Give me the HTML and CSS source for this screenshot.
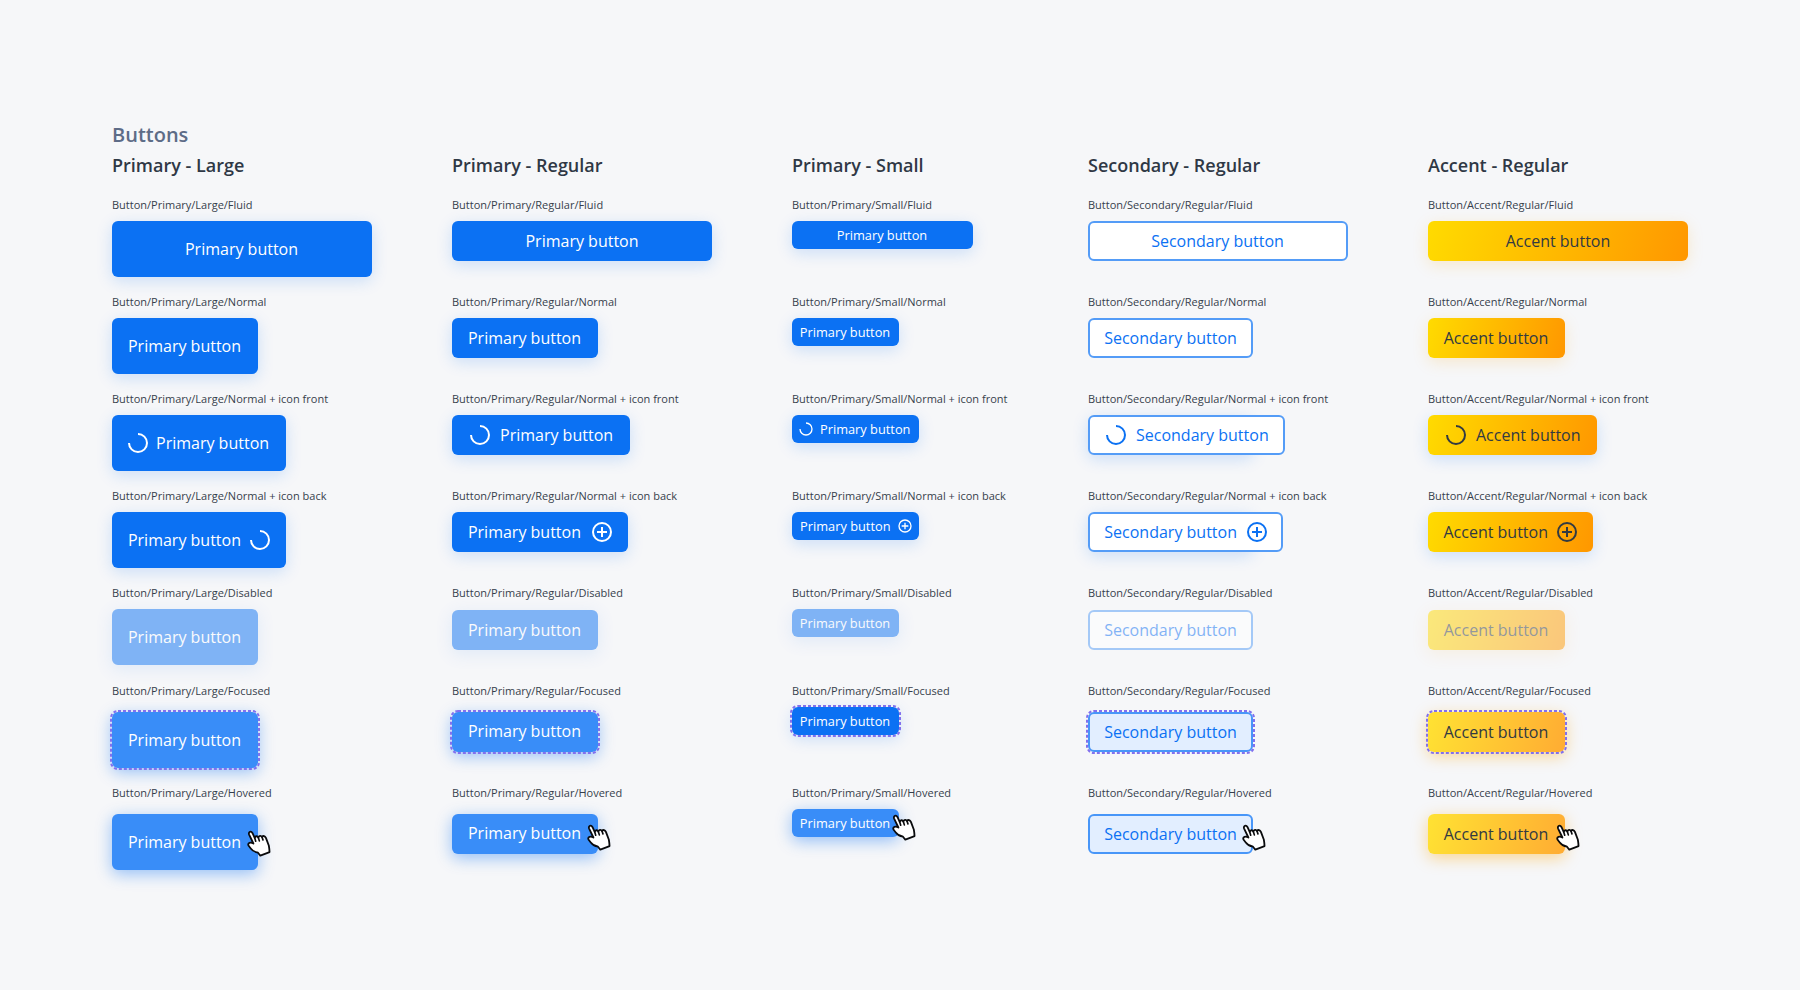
FILE: index.html
```html
<!DOCTYPE html>
<html lang="en">
<head>
<meta charset="utf-8">
<title>Buttons</title>
<link rel="stylesheet" href="styles.css">
</head>
<body>
<svg class="defs" width="0" height="0">
  <symbol id="spin" viewBox="0 0 24 24"><path d="M12 3A9 9 0 1 1 3 12" fill="none" stroke="currentColor" stroke-width="2"/></symbol>
  <symbol id="plus" viewBox="0 0 24 24"><circle cx="12" cy="12" r="9" fill="none" stroke="currentColor" stroke-width="2"/><path d="M12 7V17M7 12H17" stroke="currentColor" stroke-width="2"/></symbol>
  <symbol id="hand" viewBox="0 0 72 82"><path d="M19 41L6 14C3 5 12 2 16 9L23 24C25 18 31 17 34 23C36 17 42 16 45 21C49 16 54 18 57 24L66 48C67 54 68 60 68 67L40 78L33 69C24 67 16 63 11 56L4 47C1 39 10 36 19 41Z" fill="#fff" stroke="#0a0b0d" stroke-width="5.5" stroke-linejoin="round"/><path d="M23 24L26 34M34 23L37 33M45 21L48 30" stroke="#0a0b0d" stroke-width="5" stroke-linecap="round"/></symbol>
</svg>
<main class="sheet">
  <h1 class="title">Buttons</h1>
  <div class="columns">
    <section class="column large">
      <h2 class="heading">Primary - Large</h2>
      <div class="item"><p class="label">Button/Primary/Large/Fluid</p><button class="btn primary fluid">Primary button</button></div>
      <div class="item"><p class="label">Button/Primary/Large/Normal</p><button class="btn primary">Primary button</button></div>
      <div class="item"><p class="label">Button/Primary/Large/Normal + icon front</p><button class="btn primary front"><svg class="icon"><use href="#spin"/></svg>Primary button</button></div>
      <div class="item"><p class="label">Button/Primary/Large/Normal + icon back</p><button class="btn primary back">Primary button<svg class="icon"><use href="#spin"/></svg></button></div>
      <div class="item"><p class="label">Button/Primary/Large/Disabled</p><button class="btn primary disabled">Primary button</button></div>
      <div class="item active"><p class="label">Button/Primary/Large/Focused</p><button class="btn primary lit">Primary button<svg class="ring"><rect class="dash" x="1" y="1" rx="7"/></svg></button></div>
      <div class="item active"><p class="label">Button/Primary/Large/Hovered</p><button class="btn primary lit">Primary button<svg class="cursor"><use href="#hand"/></svg></button></div>
    </section>
    <section class="column regular">
      <h2 class="heading">Primary - Regular</h2>
      <div class="item"><p class="label">Button/Primary/Regular/Fluid</p><button class="btn primary fluid">Primary button</button></div>
      <div class="item"><p class="label">Button/Primary/Regular/Normal</p><button class="btn primary">Primary button</button></div>
      <div class="item"><p class="label">Button/Primary/Regular/Normal + icon front</p><button class="btn primary front"><svg class="icon"><use href="#spin"/></svg>Primary button</button></div>
      <div class="item"><p class="label">Button/Primary/Regular/Normal + icon back</p><button class="btn primary back">Primary button<svg class="icon"><use href="#plus"/></svg></button></div>
      <div class="item"><p class="label">Button/Primary/Regular/Disabled</p><button class="btn primary disabled">Primary button</button></div>
      <div class="item active"><p class="label">Button/Primary/Regular/Focused</p><button class="btn primary lit raised">Primary button<svg class="ring"><rect class="dash" x="1" y="1" rx="7"/></svg></button></div>
      <div class="item active"><p class="label">Button/Primary/Regular/Hovered</p><button class="btn primary lit raised">Primary button<svg class="cursor"><use href="#hand"/></svg></button></div>
    </section>
    <section class="column small">
      <h2 class="heading">Primary - Small</h2>
      <div class="item"><p class="label">Button/Primary/Small/Fluid</p><button class="btn primary fluid">Primary button</button></div>
      <div class="item"><p class="label">Button/Primary/Small/Normal</p><button class="btn primary">Primary button</button></div>
      <div class="item"><p class="label">Button/Primary/Small/Normal + icon front</p><button class="btn primary front"><svg class="icon"><use href="#spin"/></svg>Primary button</button></div>
      <div class="item"><p class="label">Button/Primary/Small/Normal + icon back</p><button class="btn primary back">Primary button<svg class="icon"><use href="#plus"/></svg></button></div>
      <div class="item"><p class="label">Button/Primary/Small/Disabled</p><button class="btn primary disabled">Primary button</button></div>
      <div class="item active"><p class="label">Button/Primary/Small/Focused</p><button class="btn primary">Primary button<svg class="ring"><rect class="dash" x="1" y="1" rx="7"/></svg></button></div>
      <div class="item active"><p class="label">Button/Primary/Small/Hovered</p><button class="btn primary lit">Primary button<svg class="cursor"><use href="#hand"/></svg></button></div>
    </section>
    <section class="column regular">
      <h2 class="heading">Secondary - Regular</h2>
      <div class="item"><p class="label">Button/Secondary/Regular/Fluid</p><button class="btn secondary fluid">Secondary button</button></div>
      <div class="item"><p class="label">Button/Secondary/Regular/Normal</p><button class="btn secondary">Secondary button</button></div>
      <div class="item"><p class="label">Button/Secondary/Regular/Normal + icon front</p><div class="shade"><button class="btn secondary front"><svg class="icon"><use href="#spin"/></svg>Secondary button</button></div></div>
      <div class="item"><p class="label">Button/Secondary/Regular/Normal + icon back</p><div class="shade"><button class="btn secondary back">Secondary button<svg class="icon"><use href="#plus"/></svg></button></div></div>
      <div class="item"><p class="label">Button/Secondary/Regular/Disabled</p><button class="btn secondary disabled">Secondary button</button></div>
      <div class="item active"><p class="label">Button/Secondary/Regular/Focused</p><button class="btn secondary lit">Secondary button<svg class="ring"><rect class="dash" x="1" y="1" rx="7"/></svg></button></div>
      <div class="item active"><p class="label">Button/Secondary/Regular/Hovered</p><button class="btn secondary lit">Secondary button<svg class="cursor"><use href="#hand"/></svg></button></div>
    </section>
    <section class="column regular">
      <h2 class="heading">Accent - Regular</h2>
      <div class="item"><p class="label">Button/Accent/Regular/Fluid</p><button class="btn accent fluid">Accent button</button></div>
      <div class="item"><p class="label">Button/Accent/Regular/Normal</p><button class="btn accent">Accent button</button></div>
      <div class="item"><p class="label">Button/Accent/Regular/Normal + icon front</p><button class="btn accent front"><svg class="icon"><use href="#spin"/></svg>Accent button</button></div>
      <div class="item"><p class="label">Button/Accent/Regular/Normal + icon back</p><button class="btn accent back">Accent button<svg class="icon"><use href="#plus"/></svg></button></div>
      <div class="item"><p class="label">Button/Accent/Regular/Disabled</p><button class="btn accent disabled">Accent button</button></div>
      <div class="item active"><p class="label">Button/Accent/Regular/Focused</p><button class="btn accent lit">Accent button<svg class="ring"><rect class="dash" x="1" y="1" rx="7"/></svg></button></div>
      <div class="item active"><p class="label">Button/Accent/Regular/Hovered</p><button class="btn accent lit">Accent button<svg class="cursor"><use href="#hand"/></svg></button></div>
    </section>
  </div>
</main>
</body>
</html>
```
FILE: styles.css
```css
* { box-sizing: border-box; }
body {
  margin: 0;
  height: 990px;
  overflow: hidden;
  background: #f6f7f9;
  font-family: "Open Sans", sans-serif;
  color: #2f3845;
}
.defs { display: block; }
.sheet { padding: 121px 0 0 112px; }
.title { margin: 0; font-size: 20px; line-height: 28px; font-weight: 600; color: #5d6c87; }
.columns { display: grid; grid-template-columns: 340px 340px 296px 340px 340px; }
.column { display: grid; grid-template-rows: 48px 97px 97px 97px 97px 98px 102px 100px; }
.heading { margin: 0; padding-top: 3px; font-size: 18px; line-height: 26px; font-weight: 600; }
.item { display: flex; flex-direction: column; align-items: flex-start; gap: 9px; }
.label { margin: 0; font-size: 11px; line-height: 15px; white-space: nowrap; color: #363f4c; }
.large .active, .regular .active { gap: 14px; }

.btn {
  position: relative;
  display: flex;
  align-items: center;
  justify-content: center;
  width: 146px;
  height: 40px;
  padding: 0 1px 0 0;
  border: 0;
  border-radius: 6px;
  font: 400 16px/22px "Open Sans", sans-serif;
  white-space: nowrap;
  flex: none;
}
.large .btn { height: 56px; }
.small .btn { height: 28px; width: 107px; font-size: 12.8px; line-height: 18px; }
.icon { width: 24px; height: 24px; flex: none; }

.primary { background: #0b71f3; color: #fff; box-shadow: 0 4px 16px rgba(11, 113, 243, 0.18); }
.primary.lit { background: #398df8; box-shadow: 0 4px 16px rgba(11, 113, 243, 0.42); }
.secondary { width: 165px; padding-right: 0; background: #fff; color: #0b71f3; border: 2px solid #549cf7; }
.secondary.lit { background: #e2eeff; border-color: #4896f8; }
.accent {
  width: 137px;
  background: linear-gradient(105deg, #ffdb00, #ff9700);
  color: #323a42;
  box-shadow: 0 4px 16px rgba(255, 165, 0, 0.18);
}
.accent.lit { background: linear-gradient(105deg, #ffe233, #ffac33); box-shadow: 0 4px 16px rgba(255, 165, 0, 0.42); }
.accent.front, .accent.back { box-shadow: 0 4px 16px rgba(11, 113, 243, 0.18); }

.btn.fluid { width: 260px; }
.primary.fluid, .accent.fluid { padding-right: 0; }
.large .btn.fluid, .secondary.fluid { padding-right: 1px; }
.small .btn.fluid { width: 181px; padding-right: 1px; }

.btn.front { justify-content: flex-start; gap: 8px; padding-left: 16px; }
.btn.back { justify-content: flex-end; gap: 9px; padding-right: 14px; }
.secondary.btn.front { padding-left: 14px; width: 197px; }
.secondary.btn.back { padding-right: 12px; width: 195px; gap: 8px; }
.primary.front { width: 178px; }
.primary.back { width: 176px; }
.accent.front { width: 169px; }
.accent.btn.back { width: 165px; gap: 7px; }
.large .btn.front, .large .btn.back { width: 174px; }
.large .btn.front { padding-left: 14px; gap: 6px; }
.large .btn.back { gap: 7px; }
.small .btn.front, .small .btn.back { width: 127px; gap: 6px; }
.small .btn.front { padding-left: 6px; }
.small .btn.back { padding-right: 6px; gap: 6.5px; }
.small .icon { width: 16px; height: 16px; }

.disabled { opacity: 0.5; }
.regular .disabled { margin-top: 1px; }
.btn.raised { padding-bottom: 2px; }

/* Shadow keeps the plain button's width under the wider icon buttons. */
.shade { position: relative; }
.shade::before {
  content: "";
  position: absolute;
  top: 0;
  left: 0;
  width: 165px;
  height: 40px;
  border-radius: 6px;
  box-shadow: 0 4px 16px rgba(11, 113, 243, 0.18);
}

.ring { position: absolute; top: -2px; left: -2px; width: calc(100% + 4px); height: calc(100% + 4px); }
.secondary .ring { top: -4px; left: -4px; width: calc(100% + 8px); height: calc(100% + 8px); }
.dash { width: calc(100% - 2px); height: calc(100% - 2px); fill: none; stroke: #8270ee; stroke-width: 2; stroke-dasharray: 3 2; }
.cursor { position: absolute; right: -13px; top: 10px; width: 24px; height: 27px; }
.large .cursor { top: 16px; }
.small .cursor { right: -16.5px; top: 5px; }
.secondary .cursor { right: -15px; top: 8px; }
.accent .cursor { right: -15px; }
```
